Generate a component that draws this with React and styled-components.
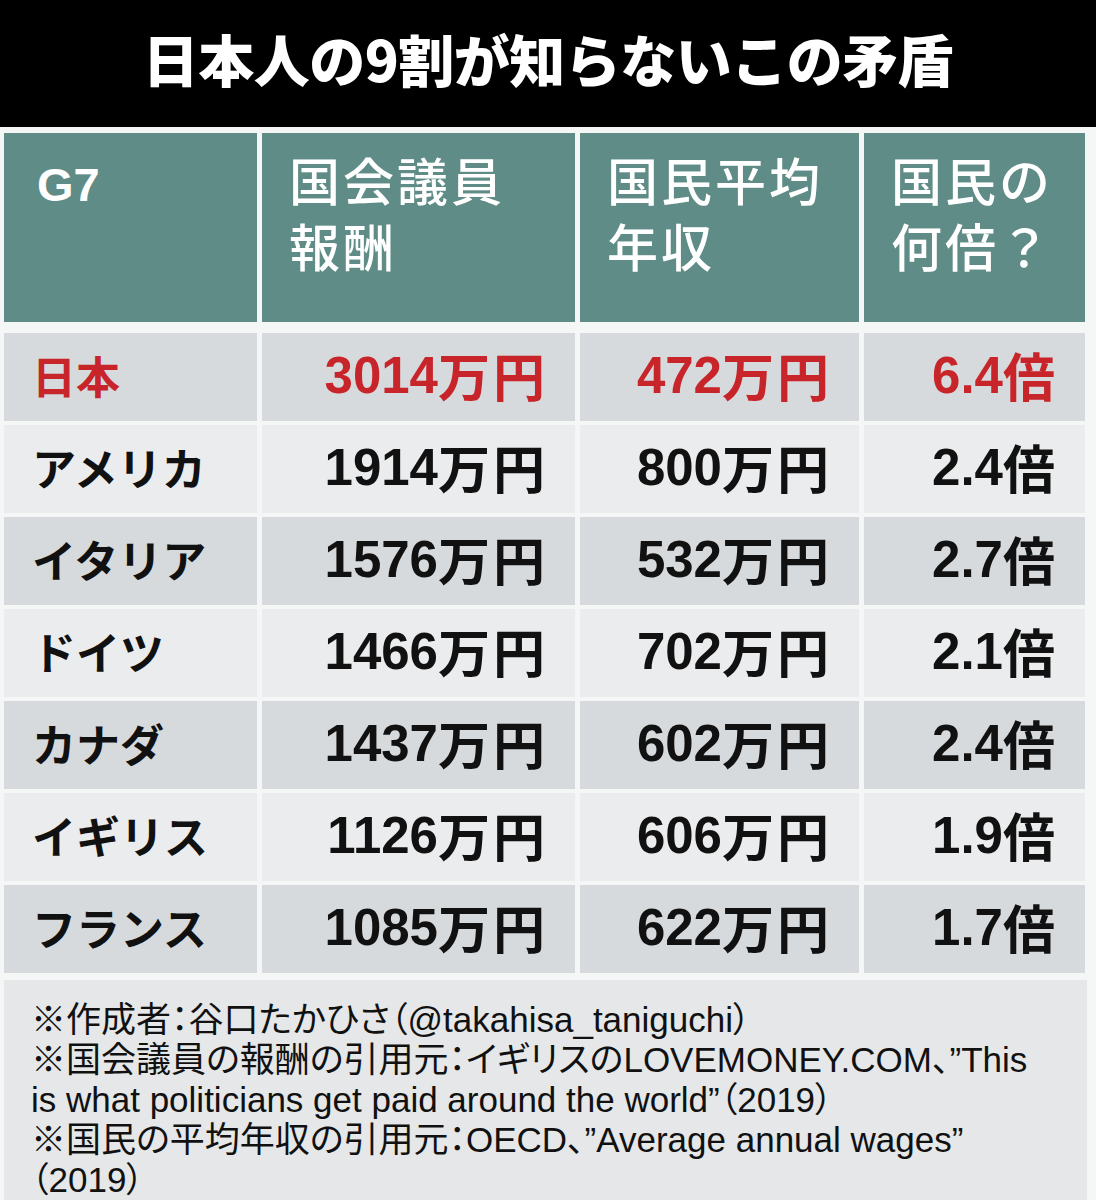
import React from 'react'
import styled, { createGlobalStyle } from 'styled-components'

const GlobalStyle = createGlobalStyle`
  html, body {
    margin: 0;
    padding: 0;
    background: #f5f6f6;
  }
`

const CJK = `"Noto Sans CJK JP", sans-serif`
const LATIN = `"Liberation Sans", "Noto Sans CJK JP", sans-serif`

const Page = styled.div`
  width: 1096px;
  height: 1200px;
  overflow: hidden;
  background: #f5f6f6;
  font-family: ${CJK};
`

const TitleBar = styled.div`
  height: 127px;
  background: #000000;
  display: flex;
  align-items: center;
  justify-content: center;
`

const Title = styled.h1`
  margin: 0 0 12px;
  color: #ffffff;
  font-family: ${CJK};
  font-weight: 900;
  font-size: 56px;
  letter-spacing: -0.5px;
  line-height: 1;
`

const Table = styled.div`
  display: flex;
  flex-direction: column;
  gap: 4px;
  padding: 6px 0 0 4px;
`

const Row = styled.div`
  display: grid;
  grid-template-columns: 253px 313px 279px 221px;
  column-gap: 5px;
  height: ${p => (p.$head ? '189px' : '88px')};
  margin-bottom: ${p => (p.$head ? '7px' : '0')};
`

const HeadCell = styled.div`
  background: #5f8c86;
  color: #ffffff;
  padding: 13px 0 0 27px;
  font-family: ${CJK};
  font-weight: 500;
  font-size: 51px;
  letter-spacing: 3px;
  line-height: 66px;
`

const G7 = styled.span`
  font-family: ${LATIN};
  font-weight: 700;
  font-size: 47px;
  letter-spacing: 0;
  padding-left: 6px;
`

const Cell = styled.div`
  background: ${p => (p.$dark ? '#d6dadc' : '#eaeced')};
  color: ${p => (p.$red ? '#c8252b' : '#111111')};
  display: flex;
  align-items: center;
  justify-content: ${p => (p.$right ? 'flex-end' : 'flex-start')};
  padding: ${p => (p.$right ? '0 30px 4px 0' : '0 0 4px 28px')};
  font-family: ${CJK};
  font-weight: 700;
`

const Country = styled.span`
  font-size: 44px;
  line-height: 1;
`

const Num = styled.span`
  font-family: ${LATIN};
  font-weight: 700;
  font-size: 51px;
  line-height: 1;
`

const Unit = styled.span`
  font-family: ${CJK};
  font-weight: 700;
  font-size: 52px;
  line-height: 1;
  letter-spacing: 3px;
  margin-right: -3px;
`

const Footer = styled.div`
  margin: 7px 9px 0 4px;
  background: #e5e7e8;
  height: 240px;
  padding: 20px 0 0 27px;
  color: #111111;
  font-family: ${LATIN};
  font-size: 35px;
  line-height: 40px;
  font-feature-settings: "palt";
`

const Line = styled.div`
  white-space: nowrap;
`

const rows = [
  { name: '日本', pay: '3014', wage: '472', ratio: '6.4', red: true },
  { name: 'アメリカ', pay: '1914', wage: '800', ratio: '2.4' },
  { name: 'イタリア', pay: '1576', wage: '532', ratio: '2.7' },
  { name: 'ドイツ', pay: '1466', wage: '702', ratio: '2.1' },
  { name: 'カナダ', pay: '1437', wage: '602', ratio: '2.4' },
  { name: 'イギリス', pay: '1126', wage: '606', ratio: '1.9' },
  { name: 'フランス', pay: '1085', wage: '622', ratio: '1.7' }
]

const App = () => {
  return (
    <Page>
      <GlobalStyle />
      <TitleBar>
        <Title>日本人の9割が知らないこの矛盾</Title>
      </TitleBar>
      <Table>
        <Row $head>
          <HeadCell><G7>G7</G7></HeadCell>
          <HeadCell>国会議員<br />報酬</HeadCell>
          <HeadCell>国民平均<br />年収</HeadCell>
          <HeadCell>国民の<br />何倍？</HeadCell>
        </Row>
        {rows.map((r, i) => {
          const dark = i % 2 === 0
          return (
            <Row key={r.name}>
              <Cell $dark={dark} $red={r.red}><Country>{r.name}</Country></Cell>
              <Cell $dark={dark} $red={r.red} $right><Num>{r.pay}</Num><Unit>万円</Unit></Cell>
              <Cell $dark={dark} $red={r.red} $right><Num>{r.wage}</Num><Unit>万円</Unit></Cell>
              <Cell $dark={dark} $red={r.red} $right><Num>{r.ratio}</Num><Unit>倍</Unit></Cell>
            </Row>
          )
        })}
      </Table>
      <Footer>
        <Line>※作成者：谷口たかひさ（@takahisa_taniguchi）</Line>
        <Line>※国会議員の報酬の引用元：イギリスのLOVEMONEY.COM、”This</Line>
        <Line>is what politicians get paid around the world”（2019）</Line>
        <Line>※国民の平均年収の引用元：OECD、”Average annual wages”</Line>
        <Line>（2019）</Line>
      </Footer>
    </Page>
  )
}

export default App
